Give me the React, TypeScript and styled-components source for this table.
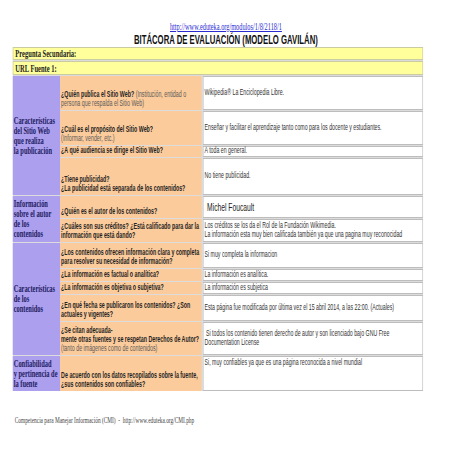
import React from "react";
import styled, { createGlobalStyle } from "styled-components";

const GlobalStyle = createGlobalStyle`
  html, body { margin: 0; padding: 0; background: #ffffff; overflow: hidden; }
`;

const Page = styled.div`
  width: 706px;
  transform: scaleX(0.64);
  transform-origin: 0 0;
  padding-top: 21px;
`;

const Header = styled.header`
  display: flex;
  flex-direction: column;
  align-items: center;
`;

const UrlLink = styled.a`
  font-family: "Liberation Serif", serif;
  font-size: 9.9px;
  line-height: 12.5px;
  color: #2b2bd2;
  text-decoration: underline;
`;

const Title = styled.h1`
  margin: 0;
  font-family: "Liberation Sans", Arial, sans-serif;
  font-weight: bold;
  font-size: 12.1px;
  line-height: 13.5px;
  color: #111111;
`;

const Grid = styled.div`
  margin-left: 20px;
  display: grid;
  grid-template-columns: 73.5px 221px 346px;
  grid-template-rows: 13px 14px 34px 34px 11px 37px 22px 23px 25px 12px 12px 26px 33px 35px;
  row-gap: 1px;
  width: fit-content;
  background: #dcdcdc;
`;

const YellowRow = styled.div`
  grid-column: 1 / -1;
  background: #ffff9c;
  border: 1px solid #cbcba2;
  display: flex;
  align-items: center;
  padding-left: 3px;
  font-family: "Liberation Serif", serif;
  font-weight: bold;
  font-size: 10.2px;
  color: #1c1c1c;
`;

const GroupLabel = styled.div<{ $span: number }>`
  grid-row: span ${(p) => p.$span};
  background: #ab9fee;
  display: flex;
  flex-direction: column;
  justify-content: center;
  padding-left: 1.5px;
  font-family: "Liberation Serif", serif;
  font-weight: bold;
  font-size: 10px;
  line-height: 10px;
  color: #221b62;
`;

const Question = styled.div`
  background: #fccb9b;
  display: flex;
  flex-direction: column;
  justify-content: flex-end;
  padding: 0 0 2px 2px;
  font-family: "Liberation Sans", Arial, sans-serif;
  font-size: 8.3px;
  line-height: 9px;
  color: #5a5a5a;
`;

const Strong = styled.span`
  font-weight: bold;
  color: #242424;
`;

const Answer = styled.div<{ $top?: boolean }>`
  background: #ffffff;
  border: 1px solid #bdbdbd;
  margin-left: 2px;
  display: flex;
  flex-direction: column;
  justify-content: ${(p) => (p.$top ? "flex-start" : "center")};
  padding: ${(p) => (p.$top ? "2px 2px 0" : "0 2px")};
  font-family: "Liberation Sans", Arial, sans-serif;
  font-size: 8.2px;
  line-height: 8.6px;
  color: #333333;
`;

const BigText = styled.span`
  font-size: 10.5px;
  padding-left: 4px;
  color: #222;
`;

const Footer = styled.footer`
  margin: 25px 0 0 23px;
  font-family: "Liberation Serif", serif;
  font-size: 8.4px;
  line-height: 10px;
  color: #444444;
`;

type Row = { q: React.ReactNode; a: React.ReactNode; top?: boolean };
type Group = { label: string[]; rows: Row[] };

const groups: Group[] = [
  {
    label: ["Características", "del Sitio Web", "que realiza", "la publicación"],
    rows: [
      {
        q: (
          <>
            <span>
              <Strong>¿Quién publica el Sitio Web?</Strong> (Institución, entidad o
            </span>
            <span>persona que respalda el Sitio Web)</span>
          </>
        ),
        a: "Wikipedia®  La Enciclopedia Libre.",
      },
      {
        q: (
          <>
            <Strong>¿Cuál es el propósito del Sitio Web?</Strong>
            <span>(Informar, vender, etc.)</span>
          </>
        ),
        a: "Enseñar y facilitar el aprendizaje tanto como para los docente y estudiantes.",
      },
      {
        q: <Strong>¿A qué audiencia se dirige el Sitio Web?</Strong>,
        a: "A toda en general.",
      },
      {
        q: (
          <>
            <Strong>¿Tiene publicidad?</Strong>
            <Strong>¿La publicidad está separada de los contenidos?</Strong>
          </>
        ),
        a: "No tiene publicidad.",
      },
    ],
  },
  {
    label: ["Información", "sobre el autor", "de los", "contenidos"],
    rows: [
      {
        q: <Strong>¿Quién es el autor de los contenidos?</Strong>,
        a: <BigText>Michel Foucault</BigText>,
      },
      {
        q: (
          <>
            <Strong>¿Cuáles son sus créditos? ¿Está calificado para dar la</Strong>
            <Strong>información que está dando?</Strong>
          </>
        ),
        a: (
          <>
            <span>Los créditos se los da el Rol de la Fundación Wikimedia.</span>
            <span>La información esta muy bien calificada también ya que una pagina muy reconocidad</span>
          </>
        ),
      },
    ],
  },
  {
    label: ["Características", "de los", "contenidos"],
    rows: [
      {
        q: (
          <>
            <Strong>¿Los contenidos ofrecen información clara y completa</Strong>
            <Strong>para resolver su necesidad de información?</Strong>
          </>
        ),
        a: "Si muy completa la informacion",
      },
      {
        q: <Strong>¿La información es factual o analítica?</Strong>,
        a: "La información es analítica.",
      },
      {
        q: <Strong>¿La información es objetiva o subjetiva?</Strong>,
        a: "La información es subjetica",
      },
      {
        q: (
          <>
            <Strong>¿En qué fecha se publicaron los contenidos? ¿Son</Strong>
            <Strong>actuales y vigentes?</Strong>
          </>
        ),
        a: "Esta página fue modificada por última vez el 15 abril 2014, a las 22:00. (Actuales)",
      },
      {
        q: (
          <>
            <Strong>¿Se citan adecuada-</Strong>
            <Strong>mente otras fuentes y se respetan Derechos de Autor?</Strong>
            <span>(tanto de imágenes como de contenidos)</span>
          </>
        ),
        a: (
          <>
            <span>&nbsp;Si todos los contenido tienen derecho de autor y son licenciado bajo  GNU Free</span>
            <span>Documentation License</span>
          </>
        ),
      },
    ],
  },
  {
    label: ["Confiabilidad", "y pertinencia de", "la fuente"],
    rows: [
      {
        q: (
          <>
            <Strong>De acuerdo con los datos recopilados sobre la fuente,</Strong>
            <Strong>¿sus contenidos son confiables?</Strong>
          </>
        ),
        a: "Si, muy confiables  ya que es una página reconocida a nivel mundial",
        top: true,
      },
    ],
  },
];

export default function App() {
  return (
    <>
      <GlobalStyle />
      <Page>
        <Header>
          <UrlLink href="#">http://www.eduteka.org/modulos/1/8/2118/1</UrlLink>
          <Title>BITÁCORA DE EVALUACIÓN (MODELO GAVILÁN)</Title>
        </Header>
        <Grid>
          <YellowRow>Pregunta Secundaria:</YellowRow>
          <YellowRow>URL Fuente 1:</YellowRow>
          {groups.map((g, gi) => (
            <React.Fragment key={gi}>
              <GroupLabel $span={g.rows.length}>
                {g.label.map((l, li) => (
                  <span key={li}>{l}</span>
                ))}
              </GroupLabel>
              {g.rows.map((r, ri) => (
                <React.Fragment key={ri}>
                  <Question>{r.q}</Question>
                  <Answer $top={r.top}>{r.a}</Answer>
                </React.Fragment>
              ))}
            </React.Fragment>
          ))}
        </Grid>
        <Footer>
          Competencia para Manejar Información (CMI)&nbsp; -&nbsp; http://www.eduteka.org/CMI.php
        </Footer>
      </Page>
    </>
  );
}
